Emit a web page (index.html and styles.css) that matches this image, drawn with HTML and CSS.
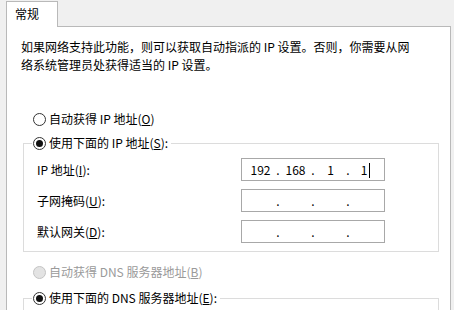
FILE: index.html
```html
<!DOCTYPE html>
<html lang="zh-CN">
<head>
    <meta charset="UTF-8">
    <title>Internet 协议版本 4 (TCP/IPv4) 属性</title>
    <link rel="stylesheet" href="styles.css">
</head>
<body>
    <div class="tabs">
        <div class="tab">常规</div>
    </div>

    <div class="panel">
        <p class="intro">如果网络支持此功能，则可以获取自动指派的 IP 设置。否则，你需要从网络系统管理员处获得适当的 IP 设置。</p>

        <div class="radio"><span class="mark"></span>自动获得 IP 地址(<u>O</u>)</div>

        <fieldset class="group">
            <legend class="radio"><span class="mark on"></span>使用下面的 IP 地址(<u>S</u>):</legend>
            <div class="fields">
                <span class="label">IP 地址(<u>I</u>):</span>
                <div class="ip">
                    <span class="octet">192</span><span class="sep">.</span>
                    <span class="octet">168</span><span class="sep">.</span>
                    <span class="octet">1</span><span class="sep">.</span>
                    <span class="octet">1<span class="caret"></span></span>
                </div>

                <span class="label">子网掩码(<u>U</u>):</span>
                <div class="ip">
                    <span class="octet"></span><span class="sep">.</span>
                    <span class="octet"></span><span class="sep">.</span>
                    <span class="octet"></span><span class="sep">.</span>
                    <span class="octet"></span>
                </div>

                <span class="label">默认网关(<u>D</u>):</span>
                <div class="ip">
                    <span class="octet"></span><span class="sep">.</span>
                    <span class="octet"></span><span class="sep">.</span>
                    <span class="octet"></span><span class="sep">.</span>
                    <span class="octet"></span>
                </div>
            </div>
        </fieldset>

        <div class="radio disabled"><span class="mark"></span>自动获得 DNS 服务器地址(<u>B</u>)</div>

        <fieldset class="group dns">
            <legend class="radio"><span class="mark on"></span>使用下面的 DNS 服务器地址(<u>E</u>):</legend>
        </fieldset>
    </div>
</body>
</html>
```

FILE: styles.css
```css
:root {
    --window-bg: #f0f0f0;
    --tab-border: #b9b9b9;
    --group-border: #dcdcdc;
    --input-border: #a8a8a8;
    --text-color: #000000;
    --disabled-text: #9a9a9a;
}

* {
    margin: 0;
    padding: 0;
    box-sizing: border-box;
}

body {
    background-color: var(--window-bg);
    font-family: "Noto Sans CJK SC", "Noto Sans", sans-serif;
    font-size: 12px;
    line-height: 18px;
    color: var(--text-color);
    overflow: hidden;
}

.tabs {
    display: flex;
    padding: 1px 0 0 6px;
}

.tab {
    position: relative;
    z-index: 1;
    width: 52px;
    height: 26px;
    margin-bottom: -1px;
    padding: 0 8px;
    line-height: 24px;
    background-color: white;
    border: 1px solid var(--tab-border);
    border-bottom: none;
}

.panel {
    width: 445px;
    min-height: 300px;
    margin-left: 6px;
    background-color: white;
    border: 1px solid var(--tab-border);
}

.intro {
    max-width: 396px;
    margin: 11px 0 0 14px;
}

.radio {
    display: flex;
    align-items: center;
    height: 18px;
    margin: 36px 0 0 26px;
    white-space: nowrap;
}

.mark {
    position: relative;
    width: 13px;
    height: 13px;
    margin-right: 3px;
    border: 1px solid #333333;
    border-radius: 50%;
    background-color: white;
    flex-shrink: 0;
}

.mark.on::after {
    content: "";
    position: absolute;
    left: 2px;
    top: 2px;
    width: 7px;
    height: 7px;
    border-radius: 50%;
    background-color: #111111;
}

.radio.disabled {
    margin-top: 11px;
    color: var(--disabled-text);
}

.radio.disabled .mark {
    border-color: #c4c4c4;
    background-color: #e3e3e3;
}

.group {
    width: 416px;
    margin: 6px 0 0 16px;
    padding: 0;
    border: 1px solid var(--group-border);
}

.group.dns {
    min-height: 90px;
    margin-top: 8px;
}

.group legend.radio {
    margin: 0 0 0 8px;
    padding: 0 3px 0 1px;
}

.fields {
    display: grid;
    grid-template-columns: 204px 144px;
    row-gap: 8px;
    align-items: center;
    padding: 6px 0 8px 13px;
}

.ip {
    display: flex;
    align-items: center;
    height: 23px;
    padding-left: 3px;
    border: 1px solid var(--input-border);
    background-color: white;
}

.octet {
    width: 31px;
    text-align: center;
}

.sep {
    width: 4px;
    text-align: center;
}

.caret {
    display: inline-block;
    width: 1px;
    height: 15px;
    margin-left: 2px;
    vertical-align: -3px;
    background-color: #000000;
}
```
